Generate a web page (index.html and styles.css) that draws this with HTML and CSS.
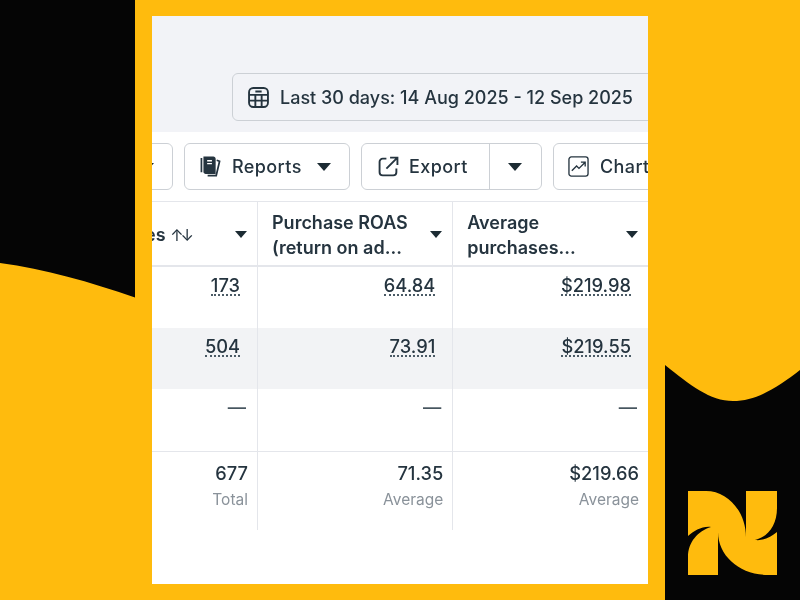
FILE: index.html
```html
<!DOCTYPE html>
<html lang="en">
  <head>
    <meta charset="UTF-8" />
    <title>Ads report</title>
    <link rel="stylesheet" href="styles.css">
  </head>
  <body>
    <svg class="backdrop" viewBox="0 0 800 600" width="800" height="600">
      <path class="ink" d="M0 0H135V297.5C90 282 45 269 0 263Z" />
      <path class="ink" d="M665 600V365C690 385 710 401 733 401C757 401 778 387 800 370V600Z" />
      <path class="logo" d="M688 491H706C728 491 746 512 746 537V491H777V508C777 525 768 537 755 540C764 541 771 537 777 532V575H768C740 575 718 556 718 532V575H688V557C688 542 698 531 711 527C702 526 694 531 688 536Z" />
    </svg>

    <div class="card">
      <div class="top">
        <div class="date-btn">
          <svg class="icon" viewBox="0 0 20 20">
            <rect x="1" y="1" width="18" height="18" rx="4" />
            <path d="M1 7.5H19M1 13H19M7 7.5V19M13 7.5V19M7 4.3H13" />
          </svg>
          Last 30 days: 14 Aug 2025 - 12 Sep 2025
        </div>
      </div>

      <div class="toolbar">
        <div class="btn first"><span class="caret"></span></div>
        <div class="btn reports">
          <svg class="icon" viewBox="0 0 22 22">
            <path class="solid" d="M4.5 1.5H14a1.5 1.5 0 0 1 1.5 1.5V18H6a1.5 1.5 0 0 1-1.5-1.5Z" />
            <path d="M1.5 2V17M17.5 4.5L20.5 5.5L17 20.5L8 20.5" />
            <path class="gap" d="M7.5 5H12.5M7.5 8H12.5" />
          </svg>
          Reports
          <span class="caret"></span>
        </div>
        <div class="btn export">
          <div class="export-main">
            <svg class="icon" viewBox="0 0 20 20">
              <path d="M8 2.5H4.5a3 3 0 0 0-3 3V15.5a3 3 0 0 0 3 3H14.5a3 3 0 0 0 3-3V12M8 12L18 2M11.5 1.5H18.5V8.5" />
            </svg>
            Export
          </div>
          <div class="export-more"><span class="caret"></span></div>
        </div>
        <div class="btn chart">
          <svg class="icon thin" viewBox="0 0 22 22">
            <rect x="1" y="1" width="20" height="20" rx="2.5" />
            <path d="M4 15.5L9 10.5L11.5 13L17.5 7M13.5 6.5H18V11" />
          </svg>
          Charts
        </div>
      </div>

      <table class="report">
        <thead>
          <tr>
            <th><div class="head"><span>Purchases <span class="sort">↑↓</span></span><span class="caret small"></span></div></th>
            <th><div class="head"><span>Purchase ROAS<br />(return on ad...</span><span class="caret small"></span></div></th>
            <th><div class="head"><span>Average<br />purchases...</span><span class="caret small"></span></div></th>
          </tr>
        </thead>
        <tbody>
          <tr class="row">
            <td><span class="metric">173</span></td>
            <td><span class="metric">64.84</span></td>
            <td><span class="metric">$219.98</span></td>
          </tr>
          <tr class="row shaded">
            <td><span class="metric">504</span></td>
            <td><span class="metric">73.91</span></td>
            <td><span class="metric">$219.55</span></td>
          </tr>
          <tr class="row empty">
            <td>—</td>
            <td>—</td>
            <td>—</td>
          </tr>
          <tr class="total">
            <td>677<small>Total</small></td>
            <td>71.35<small>Average</small></td>
            <td>$219.66<small>Average</small></td>
          </tr>
        </tbody>
      </table>
    </div>
  </body>
</html>
```

FILE: styles.css
```css
html,
body {
  margin: 0;
  padding: 0;
}
body {
  width: 800px;
  height: 600px;
  box-sizing: border-box;
  padding: 16px 152px;
  background: #ffbb0d;
  font-family: "Inter", "Noto Sans", sans-serif;
  color: #25343f;
  overflow: hidden;
  position: relative;
}
.backdrop {
  position: absolute;
  top: 0;
  left: 0;
}
.ink {
  fill: #050505;
}
.logo {
  fill: #ffbb0d;
}
.card {
  position: relative;
  height: 568px;
  background: #fff;
  overflow: hidden;
}
/* the reference is an upscaled capture, so everything is a little soft */
.date-btn,
.toolbar,
.report {
  filter: blur(0.4px);
}
.top {
  height: 116px;
  box-sizing: border-box;
  padding: 57px 0 0 80px;
  background: #f2f3f7;
}
.date-btn {
  width: 440px;
  height: 48px;
  box-sizing: border-box;
  padding-left: 15px;
  display: flex;
  align-items: center;
  gap: 11px;
  border: 1px solid #ccd0d5;
  border-radius: 6px;
  font-size: 18px;
  font-weight: 500;
  white-space: nowrap;
}
.icon {
  flex: none;
  width: 21px;
  height: 21px;
  fill: none;
  stroke: #25343f;
  stroke-width: 1.8;
}
.icon.thin {
  stroke-width: 1.4;
}
.icon .solid {
  fill: #25343f;
}
.icon .gap {
  stroke: #fff;
  stroke-width: 1.4;
}
.toolbar {
  display: flex;
  gap: 11px;
  margin: 11px 0 11px -39px;
}
.btn {
  height: 47px;
  box-sizing: border-box;
  display: flex;
  flex: none;
  align-items: center;
  border: 1px solid #ccd0d5;
  border-radius: 6px;
  font-size: 18px;
  font-weight: 500;
  letter-spacing: 0.4px;
  white-space: nowrap;
}
.first {
  width: 60px;
  padding-left: 26px;
}
.reports {
  width: 166px;
  padding-left: 15px;
  gap: 11px;
}
.reports .caret {
  margin-left: 4px;
}
.export {
  width: 181px;
}
.export-main {
  width: 128px;
  height: 100%;
  box-sizing: border-box;
  padding-left: 16px;
  display: flex;
  align-items: center;
  gap: 10px;
  border-right: 1px solid #ccd0d5;
}
.export-more {
  flex: 1;
  display: flex;
  justify-content: center;
  padding-right: 2px;
}
.chart {
  width: 140px;
  padding-left: 14px;
  gap: 11px;
}
.caret {
  flex: none;
  width: 0;
  height: 0;
  border-left: 7px solid transparent;
  border-right: 7px solid transparent;
  border-top: 8px solid #1c2b33;
}
.caret.small {
  border-left-width: 6px;
  border-right-width: 6px;
  border-top-width: 7px;
}
.report {
  width: 586px;
  margin-left: -90px;
  table-layout: fixed;
  border-collapse: collapse;
  border-top: 1px solid #e4e6eb;
}
.report th,
.report td {
  padding: 0;
  border-right: 1px solid #e4e6eb;
  text-align: right;
  vertical-align: top;
}
.report th:first-child,
.report td:first-child {
  width: 195px;
}
.report th:last-child,
.report td:last-child {
  border-right: none;
}
.report thead tr {
  height: 64px;
  border-bottom: 2px solid #e4e6eb;
}
.head {
  height: 63px;
  box-sizing: border-box;
  padding: 2px 10px 0 14px;
  display: flex;
  justify-content: space-between;
  align-items: center;
  font-size: 18px;
  font-weight: 600;
  line-height: 25px;
  text-align: left;
}
.report th:first-child .head {
  padding-left: 12px;
}
.sort {
  font-size: 16px;
  font-weight: 400;
  letter-spacing: -3px;
}
.row {
  height: 62px;
  font-size: 18.3px;
  font-weight: 500;
}
.row td {
  padding: 7px 17px 0 0;
}
.row.shaded {
  height: 61px;
  background: #f2f3f5;
}
.metric {
  display: inline-block;
  line-height: 18px;
  border-bottom: 2px dotted #4b5b66;
}
.row.empty td {
  color: #46555f;
  padding-right: 11px;
}
.total {
  height: 79px;
  border-top: 1px solid #e4e6eb;
  font-size: 18.3px;
  font-weight: 500;
}
.total td {
  padding: 10px 9px 0 0;
}
.total small {
  display: block;
  margin-top: 6px;
  font-size: 15.5px;
  font-weight: 400;
  color: #8a929a;
}
```
